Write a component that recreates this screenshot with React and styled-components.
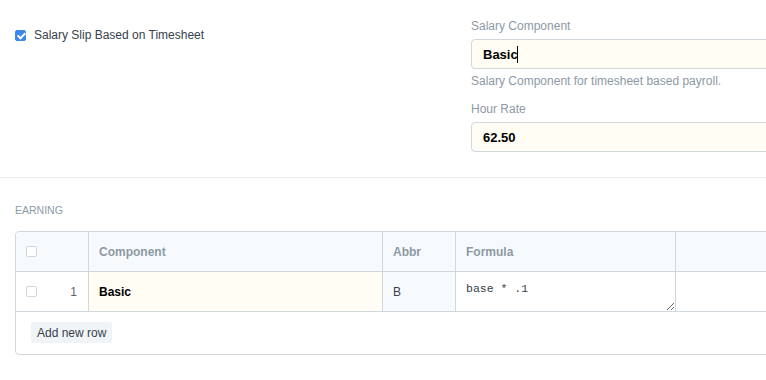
import React from 'react';
import styled, { createGlobalStyle } from 'styled-components';

const GlobalStyle = createGlobalStyle`
  body {
    margin: 0;
    background: #fff;
    font-family: "Liberation Sans", Arial, sans-serif;
    color: #36414c;
    overflow: hidden;
  }
`;

const columns = [
  { key: 'component', label: 'Component' },
  { key: 'abbr', label: 'Abbr' },
  { key: 'formula', label: 'Formula' },
  { key: 'extra', label: '' },
];

const App = () => {
  return (
    <Page>
      <GlobalStyle />
      <FormSection>
        <FormColumn>
          <CheckRow>
            <CheckBox checked />
            <span>Salary Slip Based on Timesheet</span>
          </CheckRow>
        </FormColumn>
        <FormColumn>
          <FieldLabel>Salary Component</FieldLabel>
          <Input>
            Basic<Caret />
          </Input>
          <HelpText>Salary Component for timesheet based payroll.</HelpText>
          <FieldLabel spaced>Hour Rate</FieldLabel>
          <Input>62.50</Input>
        </FormColumn>
      </FormSection>

      <TableSection>
        <SectionHead>Earning</SectionHead>
        <Grid>
          <GridRow head>
            <Cell>
              <CheckBox />
            </Cell>
            {columns.map((c) => (
              <Cell key={c.key} bordered>
                {c.label}
              </Cell>
            ))}
          </GridRow>
          <GridRow>
            <Cell>
              <CheckBox />
              <RowIndex>1</RowIndex>
            </Cell>
            <Cell bordered tone="editable">
              <strong>Basic</strong>
            </Cell>
            <Cell bordered tone="readonly">
              <AbbrText>B</AbbrText>
            </Cell>
            <Cell bordered flush>
              <Formula defaultValue="base * .1" />
            </Cell>
            <Cell bordered />
          </GridRow>
          <GridFooter>
            <SmallButton>Add new row</SmallButton>
          </GridFooter>
        </Grid>
      </TableSection>
    </Page>
  );
};

const Page = styled.div`
  width: 957px;
`;

const FormSection = styled.div`
  display: grid;
  grid-template-columns: 456px 456px;
  padding: 17px 15px 25px;
  border-bottom: 1px solid #ebeef0;
`;

const FormColumn = styled.div`
  display: flex;
  flex-direction: column;
`;

const CheckRow = styled.label`
  display: flex;
  align-items: center;
  gap: 8px;
  margin-top: 9px;
  font-size: 12px;
  line-height: 18px;
  color: #36414c;
`;

const CheckBox = styled.span`
  flex: none;
  box-sizing: border-box;
  width: 11px;
  height: 11px;
  border-radius: 2px;
  border: 1px solid ${(p) => (p.checked ? '#3b89ec' : '#d1d8dd')};
  background: ${(p) => (p.checked ? '#3b89ec' : '#fff')};
  position: relative;

  &::after {
    content: '';
    display: ${(p) => (p.checked ? 'block' : 'none')};
    position: absolute;
    left: 2.5px;
    top: 0.5px;
    width: 3px;
    height: 6px;
    border: solid #fff;
    border-width: 0 2px 2px 0;
    transform: rotate(45deg);
  }
`;

const FieldLabel = styled.div`
  font-size: 12px;
  line-height: 18px;
  color: #8d99a6;
  margin-top: ${(p) => (p.spaced ? '10px' : '0')};
  margin-bottom: 4px;
`;

const Input = styled.div`
  box-sizing: border-box;
  height: 30px;
  display: flex;
  align-items: center;
  padding: 0 11px;
  background: #fffdf4;
  border: 1px solid #d1d8dd;
  border-radius: 4px;
  font-size: 13px;
  font-weight: 700;
  color: #000;
`;

const Caret = styled.span`
  display: inline-block;
  width: 1px;
  height: 17px;
  margin-left: -1px;
  background: #000;
`;

const HelpText = styled.div`
  margin-top: 3px;
  font-size: 12px;
  line-height: 18px;
  color: #8d99a6;
`;

const TableSection = styled.div`
  padding: 24px 15px 20px;
`;

const SectionHead = styled.div`
  font-size: 10.5px;
  line-height: 16px;
  text-transform: uppercase;
  color: #8d99a6;
  margin-bottom: 13px;
`;

const Grid = styled.div`
  border: 1px solid #d1d8dd;
  border-radius: 4px;
  overflow: hidden;
`;

const GridRow = styled.div`
  box-sizing: border-box;
  display: grid;
  grid-template-columns: 72px 294px 73px 220px 1fr;
  height: 40px;
  border-bottom: 1px solid #d1d8dd;
  background: ${(p) => (p.head ? '#f7fafc' : '#fff')};
  font-size: 12px;
  font-weight: ${(p) => (p.head ? 700 : 400)};
  color: ${(p) => (p.head ? '#8d99a6' : '#000')};
`;

const cellTones = {
  editable: '#fffdf4',
  readonly: '#f7fafc',
};

const Cell = styled.div`
  display: flex;
  align-items: center;
  padding: ${(p) => (p.flush ? '0' : '0 10px')};
  border-left: ${(p) => (p.bordered ? '1px solid #d1d8dd' : 'none')};
  background: ${(p) => cellTones[p.tone] || 'transparent'};
  min-width: 0;
`;

const RowIndex = styled.span`
  margin-left: auto;
  margin-right: 1px;
  color: #5f6670;
  font-size: 12px;
`;

const AbbrText = styled.span`
  color: #36414c;
`;

const Formula = styled.textarea`
  box-sizing: border-box;
  width: 100%;
  height: 100%;
  border: none;
  outline: none;
  resize: both;
  background: #fff;
  padding: 10px 10px 0;
  margin: 0;
  font-family: "Liberation Mono", "Courier New", monospace;
  font-size: 11.5px;
  line-height: 14px;
  color: #36414c;
`;

const GridFooter = styled.div`
  padding: 10px 15px 11px;
`;

const SmallButton = styled.button`
  display: block;
  height: 21px;
  padding: 0 6px;
  border: none;
  border-radius: 3px;
  background: #f0f4f7;
  font-family: "Liberation Sans", Arial, sans-serif;
  font-size: 12px;
  color: #36414c;
`;

export default App;
